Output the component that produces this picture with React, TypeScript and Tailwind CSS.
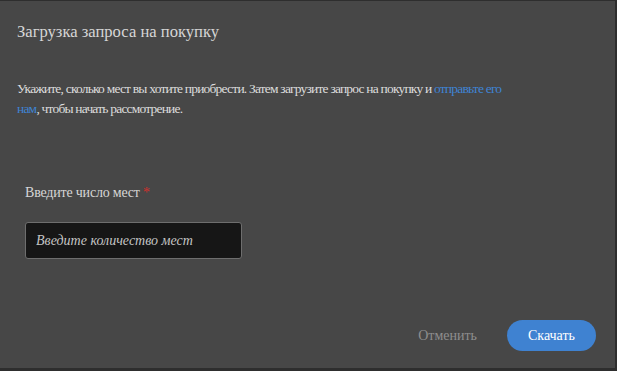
import React from 'react';

export default function App() {
  return (
    <div className="w-[617px] h-[371px] bg-[#2e2e2e] overflow-hidden font-['Liberation_Serif',serif]">
      <div className="mt-px w-[615px] h-[367px] bg-[#474747] flex flex-col">
        <h2 className="pl-[17px] pt-[18px] text-[16.6px] leading-[26px] text-[#d6d6d6]">Загрузка запроса на покупку</h2>

        <p className="mt-[34px] pl-[17px] pr-[96px] text-[13.5px] leading-[20px] tracking-[-0.8px] text-[#dcdcdc]">
          Укажите, сколько мест вы хотите приобрести. Затем загрузите запрос на покупку и{' '}
          <a href="#" className="text-[#3f84d4]">отправьте его нам</a>, чтобы начать рассмотрение.
        </p>

        <div className="mt-[61px] pl-[25px]">
          <label className="text-[14px] leading-[20px] tracking-[-0.2px] text-[#d6d6d6]">
            Введите число мест <span className="text-[#d0302c]">*</span>
          </label>
          <input
            placeholder="Введите количество мест"
            className="mt-[18px] block w-[217px] h-[37px] rounded-[3px] border border-[#6e6e6e] bg-[#161616] px-[10px] font-['Liberation_Serif',serif] text-[14px] italic text-[#ccc] placeholder:text-[#c4c4c4] outline-none"
          />
        </div>

        <div className="mt-auto mb-[17px] flex items-center justify-end gap-[30px] pr-[19px]">
          <button className="font-['Liberation_Serif',serif] text-[14px] text-[#8e8e8e]">Отменить</button>
          <button className="h-[31px] w-[89px] rounded-full bg-[#3f82d1] font-['Liberation_Serif',serif] text-[14px] text-white">Скачать</button>
        </div>
      </div>
    </div>
  );
}
